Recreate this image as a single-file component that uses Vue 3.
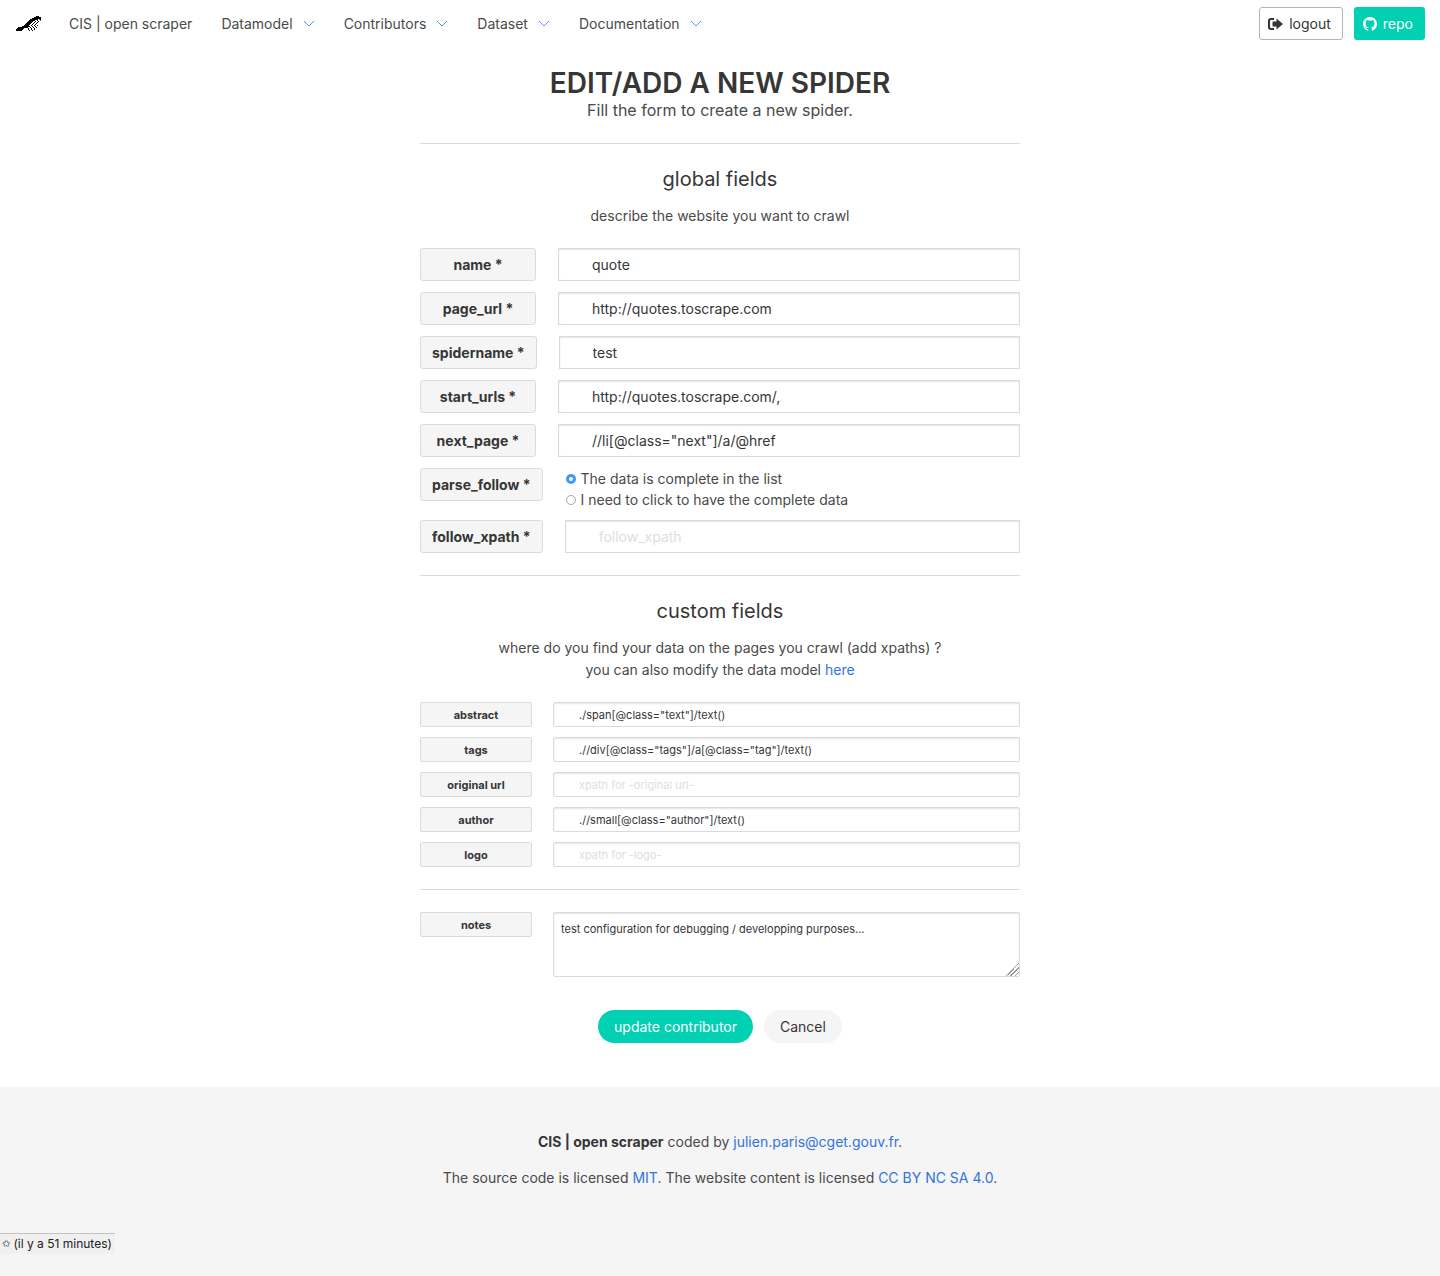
<script setup>
import { ref } from 'vue'

const menus = ['Datamodel', 'Contributors', 'Dataset', 'Documentation']

const globalFields = ref([
  { name: 'name', value: 'quote' },
  { name: 'page_url', value: 'http://quotes.toscrape.com' },
  { name: 'spidername', value: 'test' },
  { name: 'start_urls', value: 'http://quotes.toscrape.com/,' },
  { name: 'next_page', value: '//li[@class="next"]/a/@href' },
])
const parseFollow = ref('list')
const followXpath = ref('')

const customFields = ref([
  { name: 'abstract', value: './span[@class="text"]/text()' },
  { name: 'tags', value: './/div[@class="tags"]/a[@class="tag"]/text()' },
  { name: 'original url', value: '' },
  { name: 'author', value: './/small[@class="author"]/text()' },
  { name: 'logo', value: '' },
])
const notes = ref('test configuration for debugging / developping purposes...')
</script>

<template>
  <div class="page">
    <nav class="navbar">
      <a class="brand" href="#" aria-label="Home">
        <svg width="26" height="18" viewBox="0 0 26 18" shape-rendering="crispEdges">
          <path d="M1 16v-2h1v-1h1v-1h4v-1h2v-1h1V9h1V8h1V7h1V6h1V5h1V4h2V3h2V2h2V1h3v1h2v2h1v1h-2V4h-2v1h-3v1h-2v1h-2v1h-1v2h-1v2h-2v1H9v1H8v1H7v1z" />
          <path
            d="M17 6.500h7M15 8.500h9M13 10.500h10M12 12.500h10M13 14.500h7"
            stroke="#000" stroke-dasharray="1 2" />
          <path
            d="M19 5.500h6M16 7.500h8M14 9.500h9M14 11.500h8M13 13.500h8M14 15.500h5"
            stroke="#000" stroke-dasharray="1 2" />
          <path d="M24 4.500h1M25 5.500h1" stroke="#777" />
        </svg>
      </a>
      <a class="nav-item" href="#">CIS | open scraper</a>
      <a v-for="menu in menus" :key="menu" class="nav-item" href="#">
        {{ menu }}
        <svg class="arrow" width="12" height="8" viewBox="0 0 12 8">
          <path d="M1 1l5 5 5-5" fill="none" stroke="#3273dc" stroke-width="0.800" />
        </svg>
      </a>
      <div class="nav-end">
        <a class="button outlined" href="#">
          <svg width="15" height="12" viewBox="0 0 15 12">
            <path d="M6 1H3a2 2 0 0 0-2 2v6a2 2 0 0 0 2 2h3" fill="none" stroke="#363636" stroke-width="2" />
            <path d="M8.500 0.500L15 6l-6.500 5.500V8.500H4.500v-5h4z" fill="#363636" />
          </svg>
          logout
        </a>
        <a class="button primary" href="#">
          <svg width="14" height="14" viewBox="0 0 16 16">
            <path
              fill="#fff"
              d="M8 0C3.580 0 0 3.580 0 8c0 3.540 2.290 6.530 5.470 7.590.4.070.55-.17.55-.38 0-.19-.01-.82-.01-1.490-2.010.37-2.530-.49-2.690-.94-.09-.23-.48-.94-.82-1.130-.28-.15-.68-.52-.01-.53.63-.01 1.080.58 1.230.82.72 1.210 1.870.87 2.330.66.07-.52.28-.87.51-1.070-1.780-.2-3.640-.89-3.640-3.950 0-.87.31-1.590.82-2.150-.08-.2-.36-1.020.08-2.120 0 0 .67-.21 2.200.82.64-.18 1.320-.27 2-.27s1.360.09 2 .27c1.530-1.040 2.200-.82 2.200-.82.44 1.100.16 1.920.08 2.120.51.56.82 1.270.82 2.150 0 3.070-1.870 3.750-3.650 3.950.29.25.54.73.54 1.480 0 1.070-.01 1.930-.01 2.200 0 .21.15.46.55.38A8.010 8.010 0 0 0 16 8c0-4.420-3.580-8-8-8z" />
          </svg>
          repo
        </a>
      </div>
    </nav>

    <main class="content">
      <h1>EDIT/ADD A NEW SPIDER</h1>
      <p class="subtitle">Fill the form to create a new spider.</p>
      <hr />

      <form @submit.prevent>
        <section>
          <h2>global fields</h2>
          <p class="help">describe the website you want to crawl</p>
          <div class="rows">
            <div v-for="field in globalFields" :key="field.name" class="row">
              <label class="tag" :for="field.name">{{ field.name }} *</label>
              <input :id="field.name" v-model="field.value" class="input" type="text" />
            </div>
            <div class="row" role="radiogroup" aria-labelledby="parse-follow">
              <span id="parse-follow" class="tag">parse_follow *</span>
              <div class="choices">
                <label><input v-model="parseFollow" type="radio" name="parse_follow" value="list" />The data is complete in the list</label>
                <label><input v-model="parseFollow" type="radio" name="parse_follow" value="click" />I need to click to have the complete data</label>
              </div>
            </div>
            <div class="row">
              <label class="tag" for="follow_xpath">follow_xpath *</label>
              <input id="follow_xpath" v-model="followXpath" class="input" type="text" placeholder="follow_xpath" />
            </div>
          </div>
        </section>
        <hr />

        <section>
          <h2>custom fields</h2>
          <p class="help">
            where do you find your data on the pages you crawl (add xpaths) ?<br />
            you can also modify the data model <a href="#">here</a>
          </p>
          <div class="rows small">
            <div v-for="field in customFields" :key="field.name" class="row">
              <label class="tag" :for="field.name.replace(' ', '_')">{{ field.name }}</label>
              <input
                :id="field.name.replace(' ', '_')"
                v-model="field.value"
                class="input"
                type="text"
                :placeholder="`xpath for -${field.name}-`" />
            </div>
          </div>
        </section>
        <hr />

        <div class="rows small">
          <div class="row">
            <label class="tag" for="notes">notes</label>
            <textarea id="notes" v-model="notes" class="input"></textarea>
          </div>
        </div>
        <div class="actions">
          <button class="button primary rounded" type="submit">update contributor</button>
          <button class="button light rounded" type="button">Cancel</button>
        </div>
      </form>
    </main>

    <footer class="footer">
      <p><strong>CIS | open scraper</strong> coded by <a href="#">julien.paris@cget.gouv.fr</a>.</p>
      <p>
        The source code is licensed <a href="#">MIT</a>. The website content is licensed
        <a href="#">CC BY NC SA 4.0</a>.
      </p>
    </footer>
    <div class="status"><span class="star">✩</span>(il y a 51 minutes)</div>
  </div>
</template>

<style>
body {
  background: #fff;
}
</style>

<style scoped>
.page {
  min-height: 100vh;
  display: flex;
  flex-direction: column;
  font: 14px/22px Inter, "Liberation Sans", sans-serif;
  color: #4a4a4a;
}
.page *,
.page *::before {
  box-sizing: border-box;
}
a {
  color: #3273dc;
  text-decoration: none;
}
h1,
h2,
p {
  margin: 0;
  text-align: center;
}
.navbar {
  display: flex;
  align-items: center;
  height: 47px;
  padding: 0 15px;
}
.brand {
  display: flex;
  margin-right: 28px;
}
.nav-item {
  display: flex;
  align-items: center;
  gap: 10px;
  margin-right: 29px;
  color: #4a4a4a;
}
.nav-end {
  display: flex;
  gap: 11px;
  margin-left: auto;
}
.button {
  display: inline-flex;
  align-items: center;
  justify-content: center;
  gap: 6px;
  height: 33px;
  padding: 0 11px 0 8px;
  border: 1px solid transparent;
  border-radius: 3px;
  font: inherit;
  color: #363636;
}
.outlined {
  border-color: #b5b5b5;
}
.primary {
  background: #00d1b2;
  color: #fff;
}
.light {
  background: #f5f5f5;
}
.rounded {
  border-radius: 17px;
  padding: 0 15px;
}
.content {
  width: 100%;
  max-width: 600px;
  margin: 0 auto;
  padding: 19px 0 44px;
}
h1 {
  font-size: 28px;
  line-height: 34px;
  font-weight: 600;
  color: #363636;
}
.subtitle {
  font-size: 16px;
  line-height: 21px;
}
hr {
  height: 1px;
  margin: 22px 0;
  border: 0;
  background: #dbdbdb;
}
h2 {
  font-size: 20px;
  line-height: 26px;
  font-weight: 400;
  color: #363636;
}
.help {
  margin: 13px 0 21px;
}
.rows {
  display: flex;
  flex-direction: column;
  gap: 11px;
}
.row {
  display: flex;
  gap: 22px;
}
.tag {
  flex: none;
  min-width: 116px;
  height: 33px;
  padding: 0 11px;
  border: 1px solid #dbdbdb;
  border-radius: 3px;
  background: #f5f5f5;
  color: #363636;
  font-weight: 700;
  line-height: 32px;
  text-align: center;
}
.input {
  flex: 1;
  min-width: 0;
  height: 33px;
  padding: 0 33px;
  border: 1px solid #dbdbdb;
  border-radius: 0;
  box-shadow: inset 0 1px 2px rgba(10, 10, 10, 0.1);
  background: #fff;
  color: #363636;
  font: inherit;
}
.input::placeholder {
  color: #dedede;
}
.choices {
  display: flex;
  flex-direction: column;
  height: 41px;
  padding-left: 1px;
  line-height: 21px;
}
.choices label {
  display: flex;
  align-items: center;
  gap: 5px;
}
.choices input {
  appearance: none;
  width: 10px;
  height: 10px;
  margin: 0;
  border: 1px solid #a6a6a6;
  border-radius: 50%;
  background: #fff;
}
.choices input:checked {
  border: 3px solid #3b99fc;
}
.small {
  gap: 10px;
  font-size: 11px;
  line-height: 16px;
}
.small .tag {
  width: 112px;
  min-width: 0;
  height: 25px;
  border-radius: 2px;
  line-height: 24px;
}
.small .row {
  gap: 21px;
}
.small .input {
  height: 25px;
  padding: 0 25px;
  border-radius: 2px;
}
.small textarea.input {
  height: 65px;
  padding: 8px 7px;
  resize: vertical;
}
textarea::-webkit-resizer {
  background: linear-gradient(
    135deg,
    transparent 54%,
    #999 54% 60%,
    transparent 60% 69%,
    #999 69% 75%,
    transparent 75% 84%,
    #999 84% 90%,
    transparent 90%
  );
}
.actions {
  display: flex;
  justify-content: center;
  gap: 11px;
  margin-top: 33px;
}
.footer {
  flex: 1;
  display: flex;
  flex-direction: column;
  gap: 14px;
  padding: 44px 20px 87px;
  background: #f5f5f5;
}
.footer strong {
  color: #363636;
}
.status {
  position: fixed;
  left: 0;
  bottom: 22px;
  display: flex;
  gap: 3px;
  padding: 0 3px 0 2px;
  border-top: 1px solid #c4c4c4;
  background: #f0f0f0;
  color: #222;
  font-size: 12px;
  line-height: 20px;
}
.star {
  font-family: "DejaVu Sans", sans-serif;
  font-size: 10px;
}
</style>
